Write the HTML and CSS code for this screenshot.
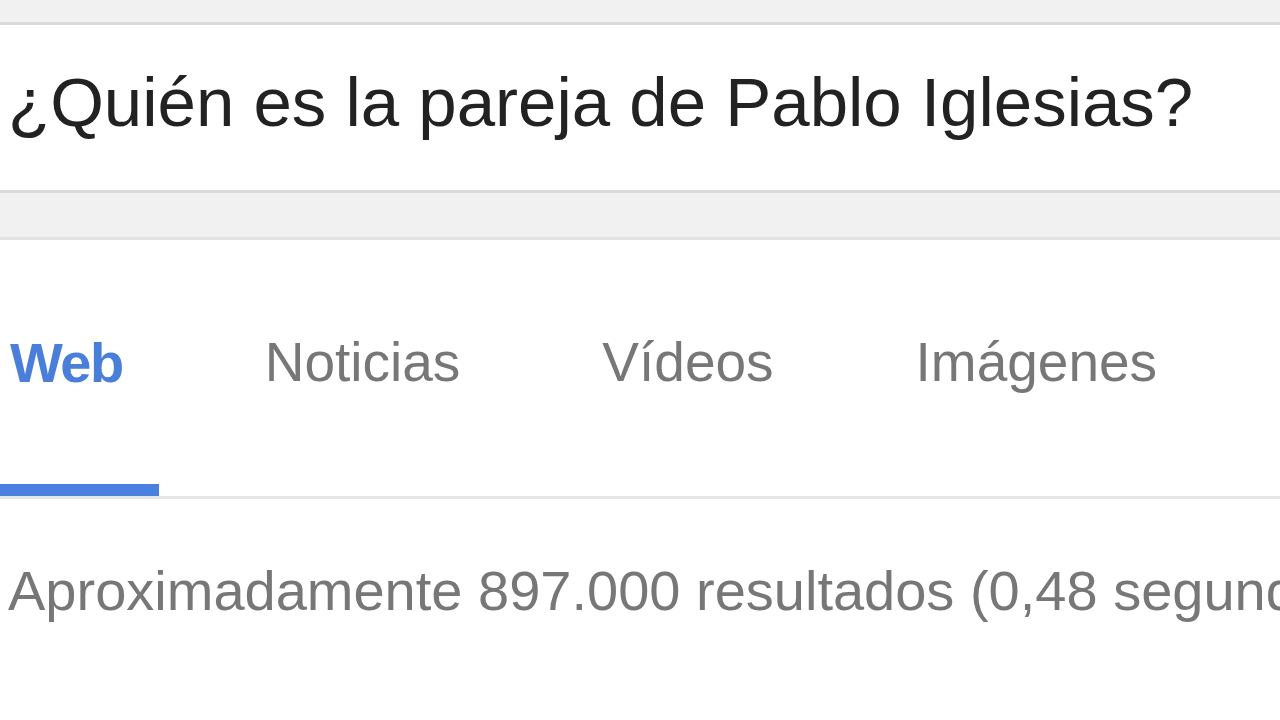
FILE: index.html
```html
<!DOCTYPE html>
<html lang="es">
<head>
    <meta charset="UTF-8">
    <meta name="viewport" content="width=device-width, initial-scale=1.0">
    <title>Búsqueda</title>
    <link rel="stylesheet" href="styles.css">
</head>
<body>

    <div class="top-bar"></div>

    <div class="search-box">
        <span class="query">¿Quién es la pareja de Pablo Iglesias?</span>
    </div>

    <div class="spacer"></div>

    <div class="tabs">
        <a class="tab active">Web</a>
        <a class="tab">Noticias</a>
        <a class="tab">Vídeos</a>
        <a class="tab">Imágenes</a>
    </div>

    <div class="stats">Aproximadamente 897.000 resultados (0,48 segundos)</div>

</body>
</html>
```

FILE: styles.css
```css
body {
    font-family: "Liberation Sans", Arial, sans-serif;
    background-color: white;
    margin: 0;
    overflow: hidden;
    width: 1280px;
    height: 720px;
}

.top-bar {
    height: 22px;
    background-color: #f1f1f1;
    border-bottom: 3px solid #dadada;
}

.search-box {
    height: 165px;
    display: flex;
    align-items: center;
    padding-left: 8px;
    background: white;
}

.query {
    font-size: 69px;
    color: #222;
    white-space: nowrap;
    margin-top: -10px;
}

.spacer {
    height: 44px;
    background-color: #f1f1f1;
    border-top: 3px solid #dadada;
    border-bottom: 3px solid #e2e2e2;
}

.tabs {
    display: flex;
    gap: 70px;
    margin-left: -26px;
    border-bottom: 3px solid #e5e5e5;
    height: 256px;
    align-items: stretch;
}

.tab {
    display: flex;
    align-items: center;
    padding: 0 36px;
    font-size: 55px;
    color: #777;
    white-space: nowrap;
    border-bottom: 12px solid transparent;
}

.tab.active {
    font-size: 56px;
    color: #4a7fd9;
    font-weight: bold;
    letter-spacing: -1.5px;
    border-bottom-color: #4a80e0;
}

.stats {
    padding: 59px 0 0 8px;
    font-size: 56px;
    color: #777;
    white-space: nowrap;
}
```
